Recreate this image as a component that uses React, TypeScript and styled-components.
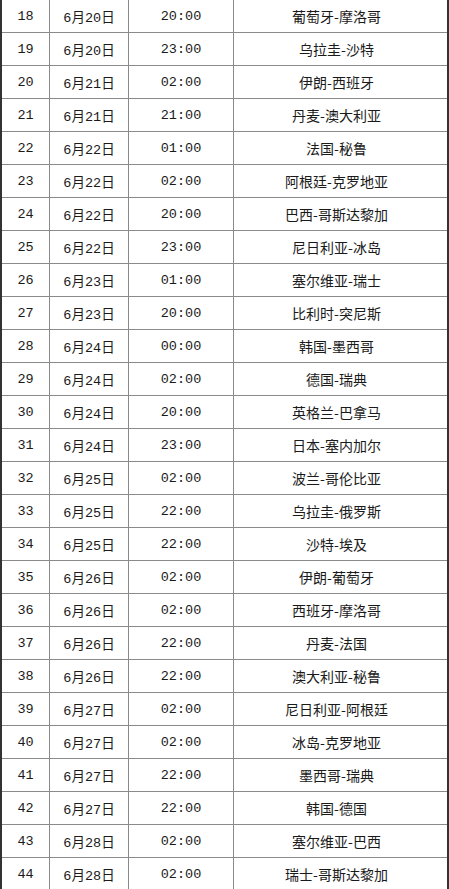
import React from "react";
import styled, { createGlobalStyle } from "styled-components";

const GlobalStyle = createGlobalStyle`
  html, body {
    margin: 0;
    padding: 0;
    background: #ffffff;
  }
`;

const rows: [number, string, string, string][] = [
  [18, "6月20日", "20:00", "葡萄牙-摩洛哥"],
  [19, "6月20日", "23:00", "乌拉圭-沙特"],
  [20, "6月21日", "02:00", "伊朗-西班牙"],
  [21, "6月21日", "21:00", "丹麦-澳大利亚"],
  [22, "6月22日", "01:00", "法国-秘鲁"],
  [23, "6月22日", "02:00", "阿根廷-克罗地亚"],
  [24, "6月22日", "20:00", "巴西-哥斯达黎加"],
  [25, "6月22日", "23:00", "尼日利亚-冰岛"],
  [26, "6月23日", "01:00", "塞尔维亚-瑞士"],
  [27, "6月23日", "20:00", "比利时-突尼斯"],
  [28, "6月24日", "00:00", "韩国-墨西哥"],
  [29, "6月24日", "02:00", "德国-瑞典"],
  [30, "6月24日", "20:00", "英格兰-巴拿马"],
  [31, "6月24日", "23:00", "日本-塞内加尔"],
  [32, "6月25日", "02:00", "波兰-哥伦比亚"],
  [33, "6月25日", "22:00", "乌拉圭-俄罗斯"],
  [34, "6月25日", "22:00", "沙特-埃及"],
  [35, "6月26日", "02:00", "伊朗-葡萄牙"],
  [36, "6月26日", "02:00", "西班牙-摩洛哥"],
  [37, "6月26日", "22:00", "丹麦-法国"],
  [38, "6月26日", "22:00", "澳大利亚-秘鲁"],
  [39, "6月27日", "02:00", "尼日利亚-阿根廷"],
  [40, "6月27日", "02:00", "冰岛-克罗地亚"],
  [41, "6月27日", "22:00", "墨西哥-瑞典"],
  [42, "6月27日", "22:00", "韩国-德国"],
  [43, "6月28日", "02:00", "塞尔维亚-巴西"],
  [44, "6月28日", "02:00", "瑞士-哥斯达黎加"],
];

// outer frame: dark left/right rules, grey grid inside
const Sheet = styled.div`
  width: 449px;
  box-sizing: border-box;
  border-left: 2px solid #333;
  border-right: 2px solid #333;
  font-family: "Liberation Mono", "Noto Sans CJK SC", monospace;
  font-size: 13.5px;
  color: #1a1a1a;
`;

const Row = styled.div`
  display: grid;
  grid-template-columns: 48px 79px 105px 1fr;
  height: 33px;
  box-sizing: border-box;
  border-bottom: 1px solid #8a8a8a;
`;

const Cell = styled.div<{ $last?: boolean }>`
  display: flex;
  align-items: center;
  justify-content: center;
  border-right: ${(p) => (p.$last ? "none" : "1px solid #8a8a8a")};
  white-space: nowrap;
`;

const Match = styled(Cell)`
  padding-right: 8px;
  font-family: "Noto Sans CJK SC", sans-serif;
  font-size: 14px;
`;

export default function App() {
  return (
    <>
      <GlobalStyle />
      <Sheet>
        {rows.map(([no, date, time, match]) => (
          <Row key={no}>
            <Cell>{no}</Cell>
            <Cell>{date}</Cell>
            <Cell>{time}</Cell>
            <Match $last>{match}</Match>
          </Row>
        ))}
      </Sheet>
    </>
  );
}
